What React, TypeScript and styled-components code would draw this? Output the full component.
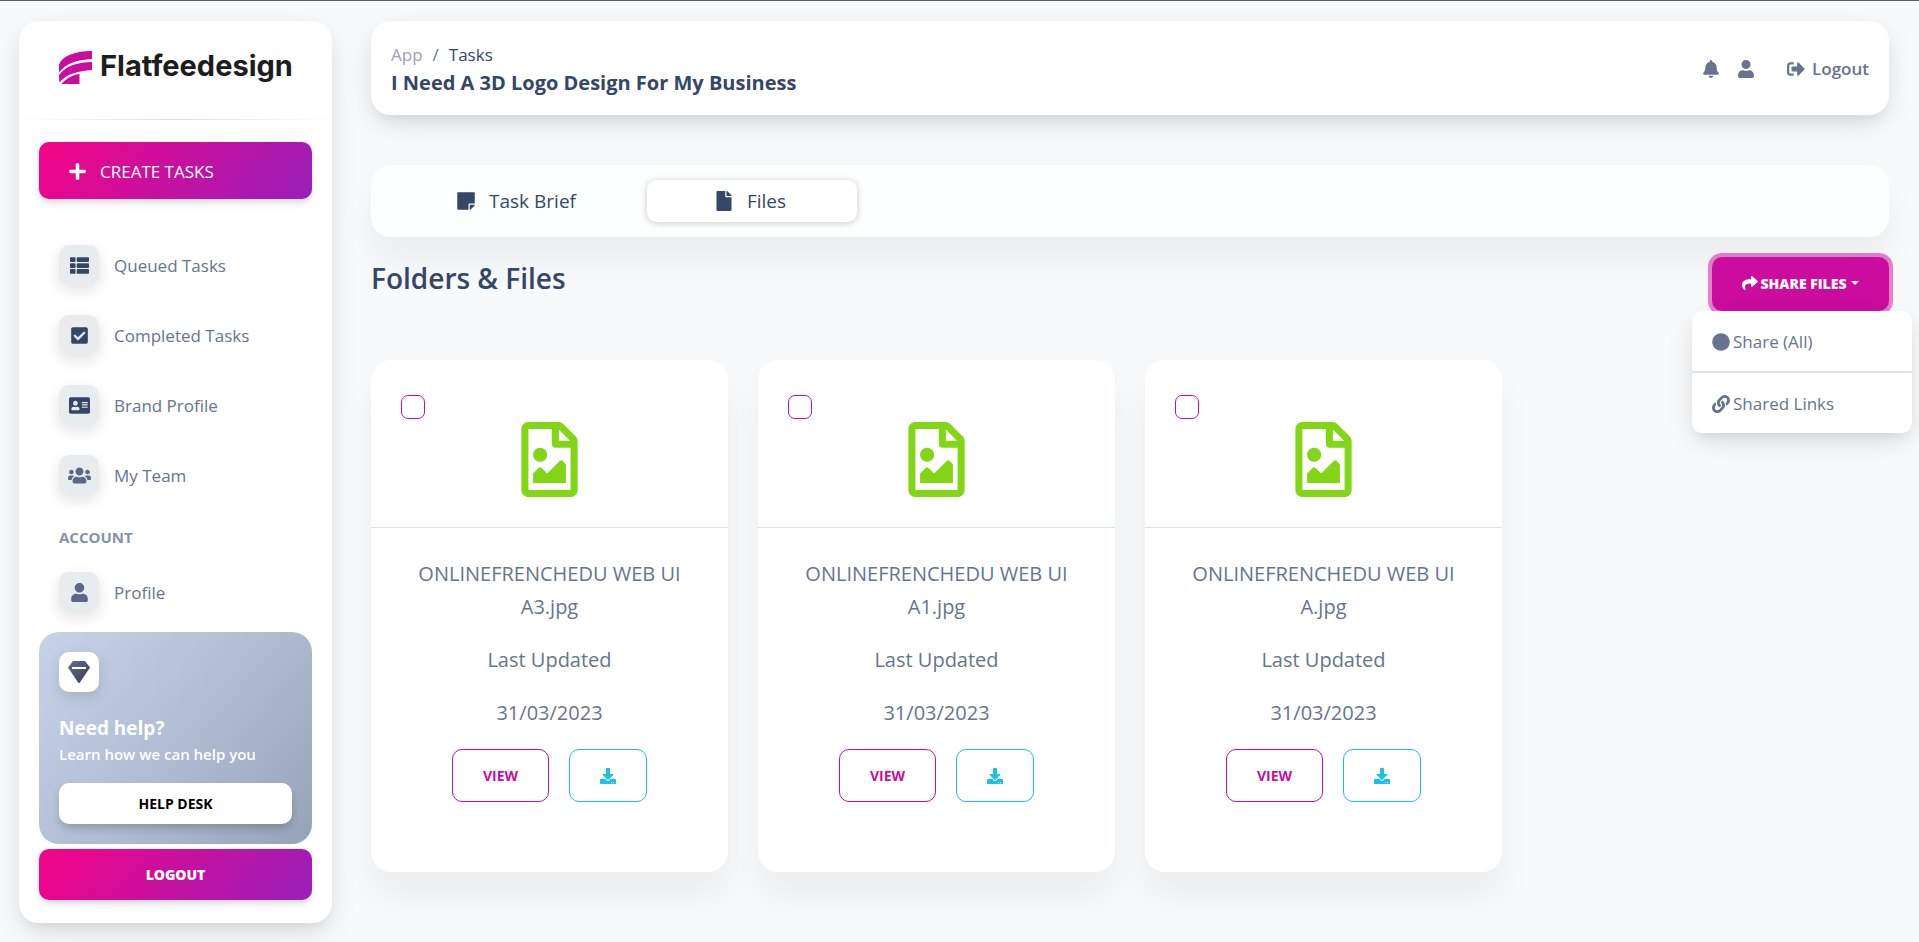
import React from "react";
import styled, { createGlobalStyle, css } from "styled-components";
import {
  FaAddressCard,
  FaBell,
  FaCheckSquare,
  FaCircle,
  FaDownload,
  FaFile,
  FaLink,
  FaPlus,
  FaRegFileImage,
  FaShare,
  FaSignOutAlt,
  FaStickyNote,
  FaThList,
  FaUser,
  FaUsers,
} from "react-icons/fa";

const color = {
  page: "#f8f9fb",
  text: "#67748e",
  dark: "#344767",
  primary: "#cb0c9f",
  info: "#17c1e8",
  lime: "#82d616",
  tile: "#e9ecef",
};

const panelShadow =
  "0 9px 29px -4px rgba(20, 20, 20, 0.15), 0 9px 11px -5px rgba(20, 20, 20, 0.06)";
const cardShadow = "0 25px 34px 0 rgba(0, 0, 0, 0.05)";
const buttonShadow =
  "0 5px 9px -1px rgba(0, 0, 0, 0.11), 0 3px 5px -1px rgba(0, 0, 0, 0.07)";
const tileShadow = "0 5px 14px rgba(20, 20, 20, 0.12)";

const GlobalStyle = createGlobalStyle`
  *, *::before, *::after { box-sizing: border-box; }
  body {
    margin: 0;
    background: ${color.page};
    color: ${color.text};
    font-family: "Open Sans", "Noto Sans", sans-serif;
    font-size: 17px;
    line-height: 28px;
  }
  button { font-family: inherit; cursor: pointer; }
  a { color: inherit; text-decoration: none; }
  h1, h2, h3, p, ul, ol { margin: 0; padding: 0; }
  ul, ol { list-style: none; }
  svg { display: block; flex: none; }
`;

const Page = styled.div`
  display: flex;
  align-items: stretch;
  gap: 39px;
  min-height: 100vh;
  padding: 20px 30px 19px 19px;
  border-top: 1px solid #5f5c63;
`;

/* Sidebar */

const Sidebar = styled.aside`
  flex: none;
  display: flex;
  flex-direction: column;
  width: 313px;
  padding: 30px 20px 23px;
  border-radius: 20px;
  background: #fff;
  box-shadow: ${panelShadow};
`;

const Brand = styled.a`
  display: flex;
  align-items: center;
  gap: 8px;
  height: 33px;
  padding: 0 20px;
  color: #1d1d1d;
  font: 700 29px/30px Inter, "Liberation Sans", sans-serif;
`;

const BrandName = styled.span`
  padding-bottom: 3px;
`;

const Rule = styled.hr`
  height: 1px;
  margin: 35px -20px 22px;
  border: 0;
  background: linear-gradient(90deg, transparent, #dcdddf, transparent);
`;

const gradientFill = css`
  border: 0;
  border-radius: 10px;
  color: #fff;
  background-image: linear-gradient(310deg, #7928ca, #ff0080);
  background-size: 150%;
  background-position-x: 25%;
  box-shadow: ${buttonShadow};
`;

const CreateButton = styled.button`
  ${gradientFill}
  display: flex;
  align-items: center;
  gap: 13px;
  height: 57px;
  padding: 2px 29px 0;
  font-size: 17px;
`;

const LogoutButton = styled.button`
  ${gradientFill}
  height: 51px;
  margin-top: 5px;
  font-size: 14px;
  font-weight: 800;
`;

const NavList = styled.ul`
  display: flex;
  flex-direction: column;
  gap: 30px;
  padding: 0 20px;
`;

const MainNav = styled.nav`
  padding-top: 46px;
`;

const NavLink = styled.a`
  display: flex;
  align-items: center;
  gap: 15px;
  font-size: 17px;
`;

const NavLabel = styled.span`
  padding-top: 2px;
`;

const Tile = styled.span<{ $fill?: string; $ink?: string }>`
  display: flex;
  align-items: center;
  justify-content: center;
  width: 40px;
  height: 40px;
  border-radius: 10px;
  background: ${(p) => p.$fill ?? color.tile};
  color: ${(p) => p.$ink ?? color.dark};
  box-shadow: ${tileShadow};
`;

const NavHeading = styled.h3`
  padding: 28px 20px 21px;
  color: #8392ab;
  font-size: 15px;
  font-weight: 700;
  line-height: 28px;
`;

const HelpCard = styled.section`
  margin-top: 20px;
  padding: 20px;
  border-radius: 20px;
  color: #fff;
  background: linear-gradient(310deg, #96a2b8, #b0bdd2 50%, #c8d3e9);
`;

const HelpTitle = styled.h2`
  margin-top: 22px;
  font-size: 19px;
  font-weight: 700;
  line-height: 28px;
`;

const HelpText = styled.p`
  margin-bottom: 16px;
  font-size: 15px;
  font-weight: 600;
  line-height: 25px;
`;

const HelpButton = styled.button`
  width: 100%;
  height: 41px;
  border: 0;
  border-radius: 10px;
  background: #fff;
  color: #000;
  font-size: 14px;
  font-weight: 700;
  box-shadow: 0 5px 9px -1px rgba(0, 0, 0, 0.2);
`;

/* Main column */

const Main = styled.main`
  flex: 1;
  min-width: 0;
`;

const TopBar = styled.header`
  display: flex;
  align-items: center;
  justify-content: space-between;
  height: 94px;
  padding: 2px 20px 0;
  border-radius: 20px;
  background: #fff;
  box-shadow: ${panelShadow};
`;

const Crumbs = styled.ol`
  display: flex;
  gap: 10px;
  color: ${color.text};
  font-size: 17px;
  line-height: 28px;
`;

const Crumb = styled.li<{ $muted?: boolean }>`
  color: ${(p) => (p.$muted ? "#9aa3b3" : color.dark)};
`;

const TaskTitle = styled.h1`
  color: ${color.dark};
  font-size: 20px;
  font-weight: 700;
  line-height: 28px;
`;

const Actions = styled.div`
  display: flex;
  align-items: center;
`;

const IconButton = styled.button`
  display: flex;
  margin-right: 17px;
  padding: 0;
  border: 0;
  background: none;
  color: ${color.text};
`;

const LogoutLink = styled.a`
  display: flex;
  align-items: center;
  gap: 7px;
  margin-left: 15px;
  font-size: 17px;
  font-weight: 600;
`;

const Tabs = styled.div`
  display: flex;
  align-items: center;
  gap: 24px;
  height: 72px;
  margin-top: 50px;
  padding: 0 42px;
  border-radius: 20px;
  background: #fdfffe;
  box-shadow: ${cardShadow};
`;

const Tab = styled.button<{ $active?: boolean }>`
  display: flex;
  align-items: center;
  justify-content: center;
  gap: 13px;
  width: 210px;
  height: 42px;
  padding: 0 4px 0 0;
  border: 0;
  border-radius: 10px;
  background: ${(p) => (p.$active ? "#fff" : "none")};
  box-shadow: ${(p) => (p.$active ? "0 1px 6px 1px rgba(0, 0, 0, 0.16)" : "none")};
  color: ${color.dark};
  font-size: 19px;
`;

const SectionHead = styled.div`
  display: flex;
  align-items: flex-start;
  justify-content: space-between;
  height: 123px;
  padding-top: 20px;
`;

const SectionTitle = styled.h2`
  color: ${color.dark};
  font-size: 28px;
  font-weight: 600;
  line-height: 42px;
`;

const ShareMenu = styled.div`
  position: relative;
`;

const ShareButton = styled.button`
  display: flex;
  align-items: center;
  justify-content: center;
  gap: 2px;
  width: 177px;
  height: 54px;
  padding: 0 0 2px;
  border: 0;
  border-radius: 10px;
  background: ${color.primary};
  color: #fff;
  font-size: 14px;
  font-weight: 800;
  box-shadow: 0 0 0 4px rgba(203, 12, 159, 0.5);
`;

const Caret = styled.span`
  margin-left: 2px;
  border-top: 4px solid #fff;
  border-left: 4px solid transparent;
  border-right: 4px solid transparent;
`;

const Menu = styled.ul`
  position: absolute;
  top: 54px;
  right: -23px;
  width: 220px;
  border-radius: 10px;
  background: #fff;
  box-shadow: ${panelShadow};
`;

const MenuItem = styled.li`
  & + & {
    border-top: 2px solid #dee2e6;
  }
`;

const MenuLink = styled.a`
  display: flex;
  align-items: center;
  gap: 3px;
  height: 60px;
  padding: 2px 20px 0;
  font-size: 17px;
`;

const FileGrid = styled.div`
  display: grid;
  grid-template-columns: repeat(4, 1fr);
  gap: 30px;
`;

const FileCard = styled.article`
  padding-bottom: 70px;
  border-radius: 20px;
  background: #fff;
  box-shadow: ${cardShadow};
  text-align: center;
`;

const FileTop = styled.div`
  display: flex;
  flex-direction: column;
  padding: 35px 30px 30px;
  border-bottom: 1px solid #dee2e6;
`;

const FileCheck = styled.input`
  appearance: none;
  width: 24px;
  height: 24px;
  margin: 0;
  border: 1px solid ${color.primary};
  border-radius: 7px;
  background: #fff;
  &:checked {
    background: ${color.primary};
  }
`;

const FilePicture = styled.div`
  display: flex;
  justify-content: center;
  padding-top: 3px;
  color: ${color.lime};
`;

const FileInfo = styled.div`
  display: flex;
  flex-direction: column;
  gap: 20px;
  padding: 29px 30px 0;
  font-size: 20px;
  line-height: 33px;
`;

const FileButtons = styled.div`
  display: flex;
  justify-content: center;
  gap: 20px;
  padding-top: 20px;
`;

const OutlineButton = styled.button<{ $tone: string }>`
  display: flex;
  align-items: center;
  justify-content: center;
  height: 53px;
  padding: 0 30px;
  border: 1px solid ${(p) => p.$tone};
  border-radius: 10px;
  background: #fff;
  color: ${(p) => p.$tone};
  font-size: 14px;
  font-weight: 700;
`;

function LogoMark() {
  return (
    <svg width="33" height="33" viewBox="0 0 33 33" fill={color.primary} aria-hidden="true">
      <path d="M33 0v8C17 9 7 12.500 0 21.500v-8C4 4.500 16 0 33 0z" />
      <path d="M33 11v8C18 20 8 23 .300 31.500L0 24C7 15 17 11.500 33 11z" />
      <path d="M20.500 23v10H2.500C7 27.500 13 24 20.500 23z" />
    </svg>
  );
}

function Diamond() {
  return (
    <svg width="22" height="22" viewBox="0 0 22 22" aria-hidden="true">
      <defs>
        <linearGradient id="gem" x1="0" y1="0" x2="1" y2="1">
          <stop offset="0" stopColor="#627094" />
          <stop offset="1" stopColor="#3a3850" />
        </linearGradient>
      </defs>
      <path d="M5 0h12l5 6.500L11.500 22h-1L0 6.500z" fill="url(#gem)" />
      <path d="M4 6h14v2H4z" fill="#fff" />
    </svg>
  );
}

const navItems = [
  { label: "Queued Tasks", icon: <FaThList size={19} />, ink: color.dark },
  { label: "Completed Tasks", icon: <FaCheckSquare size={19} />, ink: color.dark },
  { label: "Brand Profile", icon: <FaAddressCard size={21} />, ink: color.dark },
  { label: "My Team", icon: <FaUsers size={23} />, ink: "#5a6884" },
];

const files = [
  "ONLINEFRENCHEDU WEB UI A3.jpg",
  "ONLINEFRENCHEDU WEB UI A1.jpg",
  "ONLINEFRENCHEDU WEB UI A.jpg",
];

export default function App() {
  return (
    <>
      <GlobalStyle />
      <Page>
        <Sidebar>
          <Brand href="#">
            <LogoMark />
            <BrandName>Flatfeedesign</BrandName>
          </Brand>
          <Rule />
          <CreateButton type="button">
            <FaPlus size={19} />
            CREATE TASKS
          </CreateButton>
          <MainNav>
            <NavList>
              {navItems.map((item) => (
                <li key={item.label}>
                  <NavLink href="#">
                    <Tile $ink={item.ink}>{item.icon}</Tile>
                    <NavLabel>{item.label}</NavLabel>
                  </NavLink>
                </li>
              ))}
            </NavList>
            <NavHeading>ACCOUNT</NavHeading>
            <NavList>
              <li>
                <NavLink href="#">
                  <Tile $ink="#5a6884">
                    <FaUser size={19} />
                  </Tile>
                  <NavLabel>Profile</NavLabel>
                </NavLink>
              </li>
            </NavList>
          </MainNav>
          <HelpCard>
            <Tile $fill="#fff">
              <Diamond />
            </Tile>
            <HelpTitle>Need help?</HelpTitle>
            <HelpText>Learn how we can help you</HelpText>
            <HelpButton type="button">HELP DESK</HelpButton>
          </HelpCard>
          <LogoutButton type="button">LOGOUT</LogoutButton>
        </Sidebar>

        <Main>
          <TopBar>
            <div>
              <Crumbs>
                <Crumb $muted>
                  <a href="#">App</a>
                </Crumb>
                <li aria-hidden="true">/</li>
                <Crumb>Tasks</Crumb>
              </Crumbs>
              <TaskTitle>I Need A 3D Logo Design For My Business</TaskTitle>
            </div>
            <Actions>
              <IconButton type="button" aria-label="Notifications">
                <FaBell size={18} />
              </IconButton>
              <IconButton type="button" aria-label="Account">
                <FaUser size={18} />
              </IconButton>
              <LogoutLink href="#">
                <FaSignOutAlt size={18} />
                Logout
              </LogoutLink>
            </Actions>
          </TopBar>

          <Tabs role="tablist">
            <Tab type="button" role="tab" aria-selected="false">
              <FaStickyNote size={20} />
              Task Brief
            </Tab>
            <Tab type="button" role="tab" aria-selected="true" $active>
              <FaFile size={20} />
              Files
            </Tab>
          </Tabs>

          <SectionHead>
            <SectionTitle>Folders &amp; Files</SectionTitle>
            <ShareMenu>
              <ShareButton type="button" aria-expanded="true">
                <FaShare size={16} />
                SHARE FILES
                <Caret />
              </ShareButton>
              <Menu>
                <MenuItem>
                  <MenuLink href="#">
                    <FaCircle size={18} />
                    Share (All)
                  </MenuLink>
                </MenuItem>
                <MenuItem>
                  <MenuLink href="#">
                    <FaLink size={18} />
                    Shared Links
                  </MenuLink>
                </MenuItem>
              </Menu>
            </ShareMenu>
          </SectionHead>

          <FileGrid>
            {files.map((name) => (
              <FileCard key={name}>
                <FileTop>
                  <FileCheck type="checkbox" aria-label={name} />
                  <FilePicture>
                    <FaRegFileImage size={75} />
                  </FilePicture>
                </FileTop>
                <FileInfo>
                  <p>{name}</p>
                  <p>Last Updated</p>
                  <p>31/03/2023</p>
                </FileInfo>
                <FileButtons>
                  <OutlineButton type="button" $tone={color.primary}>
                    VIEW
                  </OutlineButton>
                  <OutlineButton type="button" $tone={color.info} aria-label="Download">
                    <FaDownload size={16} />
                  </OutlineButton>
                </FileButtons>
              </FileCard>
            ))}
          </FileGrid>
        </Main>
      </Page>
    </>
  );
}
